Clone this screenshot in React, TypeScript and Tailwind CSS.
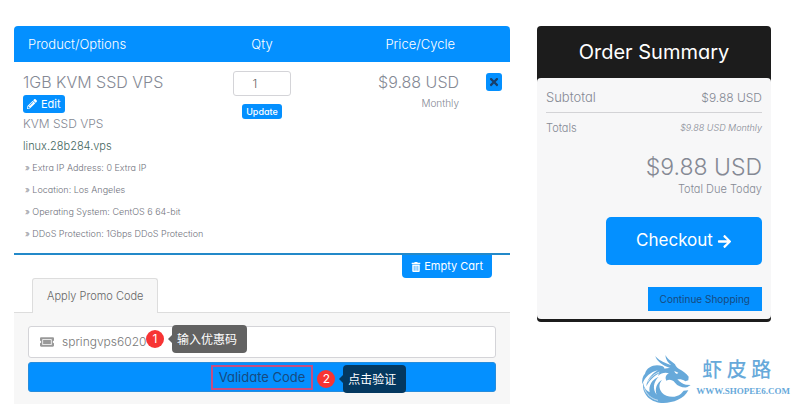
import { FaArrowRight, FaPencilAlt, FaTicketAlt, FaTimes, FaTrashAlt } from "react-icons/fa";

const options = [
  "Extra IP Address: 0 Extra IP",
  "Location: Los Angeles",
  "Operating System: CentOS 6 64-bit",
  "DDoS Protection: 1Gbps DDoS Protection",
];

function Cart() {
  return (
    <table className="w-full table-fixed border-separate border-spacing-0">
      <colgroup>
        <col className="w-[42%]" />
        <col className="w-[16%]" />
        <col />
        <col className="w-[51px]" />
      </colgroup>
      <thead>
        <tr className="h-9 text-[13px] leading-4 text-white">
          <th scope="col" className="rounded-tl bg-[#0490ff] pl-3.5 text-left font-light">Product/Options</th>
          <th scope="col" className="bg-[#0490ff] text-center font-light">Qty</th>
          <th scope="col" className="bg-[#0490ff] pr-1 text-right font-light">Price/Cycle</th>
          <th className="rounded-tr bg-[#0490ff]" aria-label="Remove" />
        </tr>
      </thead>
      <tbody>
        <tr className="align-top">
          <td className="border-b-2 border-[#2389c9] pt-2.5 pb-2 pl-[9px]">
            <h2 className="text-base leading-5 text-[#858994]">1GB KVM SSD VPS</h2>
            <button className="mt-[3px] flex h-[18px] items-center gap-1 rounded-[3px] bg-[#0490ff] px-1 text-[11px] leading-4 font-normal text-white">
              <FaPencilAlt size={10} />
              Edit
            </button>
            <p className="text-xs leading-[22px] text-[#858994]">KVM SSD VPS</p>
            <p className="text-[11px] leading-[22px] text-[#3f6660]">linux.28b284.vps</p>
            <ul className="pl-0.5 text-[9px] leading-[22px] text-[#6f727c]">
              {options.map((o) => (
                <li key={o}>» {o}</li>
              ))}
            </ul>
          </td>
          <td className="border-b-2 border-[#2389c9] pt-[9px]">
            <div className="flex flex-col items-center gap-2">
              <input
                aria-label="Quantity"
                defaultValue="1"
                className="h-[25px] w-[58px] rounded-[3px] border border-[#d4d4d8] bg-white pr-3.5 text-center text-xs text-[#666]"
              />
              <button className="h-[15px] rounded-[3px] bg-[#0490ff] px-1 text-[9px] leading-[15px] font-medium text-white">
                Update
              </button>
            </div>
          </td>
          <td className="border-b-2 border-[#2389c9] pt-2.5 text-right text-[#858994]">
            <p className="text-base leading-5">$9.88 USD</p>
            <p className="text-[10px] leading-[22px]">Monthly</p>
          </td>
          <td className="border-b-2 border-[#2389c9] pt-[11px] pr-2">
            <button aria-label="Remove item" className="ml-auto flex h-[18px] w-4 items-center justify-center rounded-[3px] bg-[#0490ff] text-[#173f6b]">
              <FaTimes size={12} />
            </button>
          </td>
        </tr>
      </tbody>
    </table>
  );
}

function Callout({ n, tone, children }: { n: number; tone: "gray" | "navy"; children: string }) {
  return (
    <span className="flex items-center font-['Noto_Sans_CJK_SC',sans-serif] text-xs font-normal whitespace-nowrap text-white">
      <span className="mr-1 flex size-[18px] items-center justify-center rounded-full bg-[#f73434] font-['Inter',sans-serif]">{n}</span>
      <span className={"border-y-4 border-r-4 border-y-transparent " + (tone === "gray" ? "border-r-[#626262]" : "border-r-[#04385f]")} />
      <span className={"rounded-sm pr-2.5 pl-[5px] leading-7 " + (tone === "gray" ? "bg-[#626262]" : "bg-[#04385f]")}>
        {children}
      </span>
    </span>
  );
}

function Promo() {
  return (
    <section>
      <div className="flex items-start justify-end pr-[18px]">
        <button className="flex h-[23px] items-center gap-[3px] rounded-b bg-[#0490ff] px-[9px] text-[11px] font-normal text-white">
          <FaTrashAlt size={10} />
          Empty Cart
        </button>
      </div>
      <div className="flex border-b border-[#ddd] pl-[18px]">
        <button className="-mb-px h-[35px] rounded-t-[3px] border border-b-0 border-[#ddd] bg-[#f7f7f7] px-3.5 text-[11px] text-[#666]">
          Apply Promo Code
        </button>
      </div>
      <form className="bg-[#f7f7f7] px-3.5 pt-[13px] pb-3" onSubmit={(e) => e.preventDefault()}>
        <div className="relative flex h-8 items-center gap-2 rounded-[3px] border border-[#d4d4d8] bg-white px-[11px]">
          <FaTicketAlt size={14} className="text-[#999]" />
          <input aria-label="Promo code" defaultValue="springvps6020" className="min-w-0 flex-1 text-xs text-[#777] outline-none" />
          <div className="absolute -top-0.5 left-[117px]">
            <Callout n={1} tone="gray">输入优惠码</Callout>
          </div>
        </div>
        <button className="mt-1 flex h-[30px] w-full items-center justify-center rounded-[3px] border border-[#268ddd] bg-[#0490ff] text-[13px] leading-5 text-[#174a80]">
          <span className="relative font-normal">
            Validate Code
            <span className="absolute -inset-x-2 -top-0.5 -bottom-[3px] border-2 border-[#c44d82]" />
            <span className="absolute -top-0.5 left-full ml-3">
              <Callout n={2} tone="navy">点击验证</Callout>
            </span>
          </span>
        </button>
      </form>
    </section>
  );
}

function Summary() {
  return (
    <aside className="overflow-hidden rounded bg-[#1c1c1c] pb-[3px]">
      <h2 className="text-center text-xl leading-[52px] font-normal text-white">Order Summary</h2>
      <div className="flex flex-col rounded bg-[#f7f7f8] px-[9px] py-2 text-[#858994]">
        <div className="flex justify-between border-b border-[#d3d3d6] pb-[3px] text-xs leading-[23px]">
          <span className="text-[13px]">Subtotal</span>
          <span>$9.88 USD</span>
        </div>
        <div className="flex justify-between pt-1 text-[11px] leading-[22px]">
          <span>Totals</span>
          <em className="text-[9px]">$9.88 USD Monthly</em>
        </div>
        <p className="mt-3 text-right text-[23px] leading-[32px]">$9.88 USD</p>
        <p className="text-right text-[11px] leading-3">Total Due Today</p>
        <button className="mt-[22px] flex h-12 w-[156px] items-center justify-center gap-1 self-end rounded-[5px] bg-[#0490ff] text-[17px] font-normal text-white">
          Checkout
          <FaArrowRight size={15} />
        </button>
        <a href="#shop" className="mt-[22px] self-end bg-[#0490ff] px-3 text-[10px] leading-6 font-normal text-[#174a80]">
          Continue Shopping
        </a>
      </div>
    </aside>
  );
}

function Watermark() {
  return (
    <div className="absolute right-2.5 bottom-3.5 flex items-center gap-1 text-[#67a9da]">
      <svg width="52" height="50" viewBox="14 16 156 150" fill="currentColor" aria-hidden="true">
        <path d="M89 52 C76 44 64 36 60 22 C70 35 84 40 98 46 L108 50 C98 42 91 33 90 19 C97 33 110 38 119 47 C122 53 124 57 130 60 C143 67 154 74 160 84 L159 95 L150 98 C142 92 134 91 126 92 C134 101 142 106 152 108 L166 109 L155 116 C140 117 128 113 119 102 C112 94 102 91 93 96 C88 86 92 78 101 74 C90 70 77 73 68 82 C73 66 86 57 104 58 Z" />
        <path d="M82 53 C62 44 35 52 29 75 C22 82 19 94 21 107 C29 84 45 70 68 65 C47 77 34 94 33 113 C46 90 61 77 86 68 C90 62 88 57 82 53 Z" />
        <path d="M70 84 C50 92 39 111 43 131 C29 124 24 112 25 101 C17 129 39 157 71 162 C104 166 144 155 159 125 L145 126 L137 135 C119 150 92 145 80 132 C70 120 70 105 80 94 C65 101 57 121 64 138 C51 120 54 100 70 84 Z" />
        <path d="M117 67 L129 72 L125 76 C121 75 118 72 117 67 Z" fill="white" />
        <path d="M27 119 C33 138 49 151 68 155 M36 101 C45 85 57 76 72 70" fill="none" stroke="white" strokeWidth="2" />
      </svg>
      <div className="flex flex-col items-start">
        <span className="pl-1.5 font-['Noto_Sans_CJK_SC',sans-serif] text-xl leading-6 font-medium">虾 皮 路</span>
        <span className="font-['Liberation_Serif',serif] text-[9px] leading-5 font-bold">WWW.SHOPEE6.COM</span>
      </div>
    </div>
  );
}

export default function App() {
  return (
    <main className="relative min-h-screen bg-white pt-[26px] pr-[29px] pb-3 pl-3.5 font-['Inter',sans-serif] font-light [font-feature-settings:'cv11']">
      <div className="grid grid-cols-[496fr_234fr] items-start gap-[27px]">
        <div>
          <Cart />
          <Promo />
        </div>
        <Summary />
      </div>
      <Watermark />
    </main>
  );
}
